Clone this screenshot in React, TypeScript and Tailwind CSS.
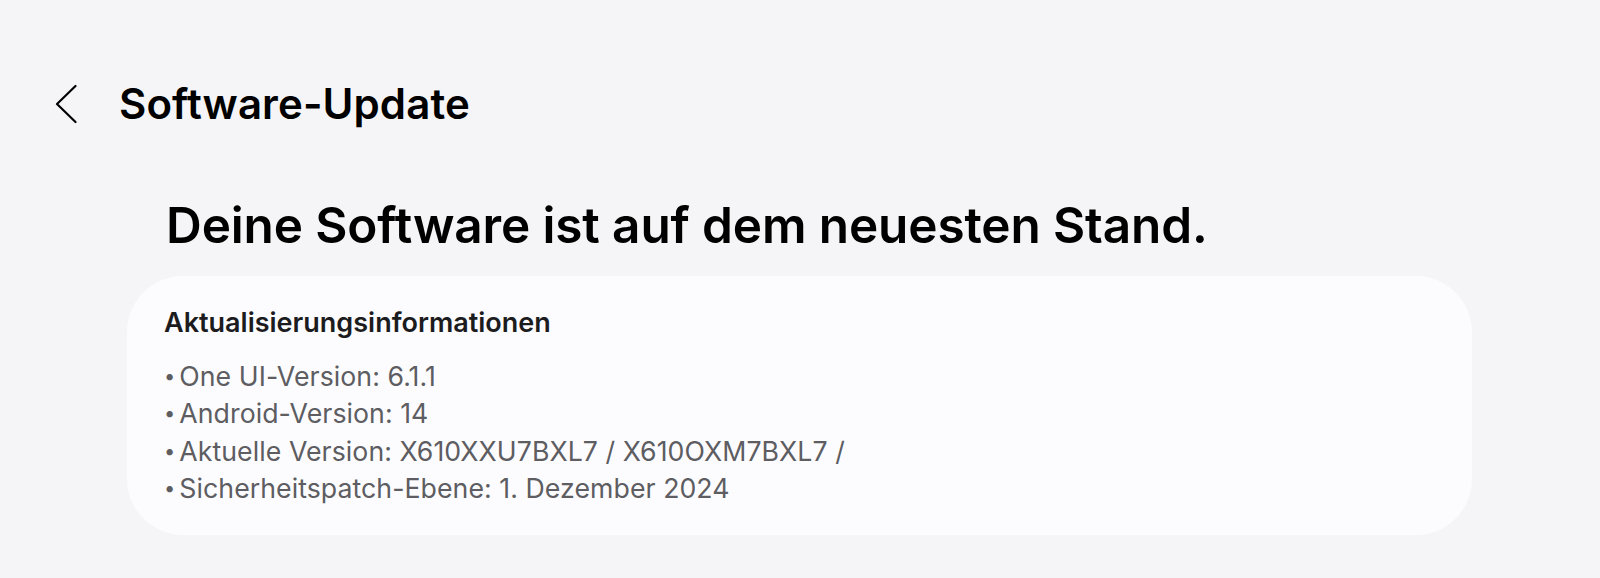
import React from 'react'

const infoLines = [
  'One UI-Version: 6.1.1',
  'Android-Version: 14',
  'Aktuelle Version: X610XXU7BXL7 / X610OXM7BXL7 /',
  'Sicherheitspatch-Ebene: 1. Dezember 2024',
]

const BackChevron = () => (
  <svg width="22" height="40" viewBox="0 0 22 40" fill="none" className="text-black">
    <path d="M20.5 2 L2 20 L20.5 38" stroke="currentColor" strokeWidth="2.2" strokeLinecap="round" strokeLinejoin="round" />
  </svg>
)

const App = () => {
  return (
    <div className="min-h-[578px] w-full bg-[#f5f5f7] font-['Inter','Noto_Sans',sans-serif]">
      {/* header */}
      <div className="flex items-center pl-[55px] pt-[84px]">
        <BackChevron />
        <h1 className="ml-[42px] text-[42px] font-semibold leading-[40px] tracking-[0.1px] text-black">
          Software-Update
        </h1>
      </div>

      <div className="pl-[127px] pr-[128px]">
        <h2 className="ml-[39px] mt-[76px] text-[49.5px] font-semibold leading-[50px] tracking-[-0.12px] text-black">
          Deine Software ist auf dem neuesten Stand.
        </h2>

        <div className="mt-[26px] rounded-[56px] bg-[#fcfcfe] px-[37px] pb-[27px] pt-[30px]">
          <h3 className="text-[27px] font-semibold leading-[34px] text-[#1c1c1e]">Aktualisierungsinformationen</h3>
          <ul className="mt-[18px]">
            {infoLines.map((line) => (
              <li key={line} className="flex text-[26.7px] leading-[37.4px] tracking-[0.05px] text-[#5d5d62]">
                <span className="mr-[4px] text-[20px]">•</span>
                {line}
              </li>
            ))}
          </ul>
        </div>
      </div>
    </div>
  )
}

export default App
